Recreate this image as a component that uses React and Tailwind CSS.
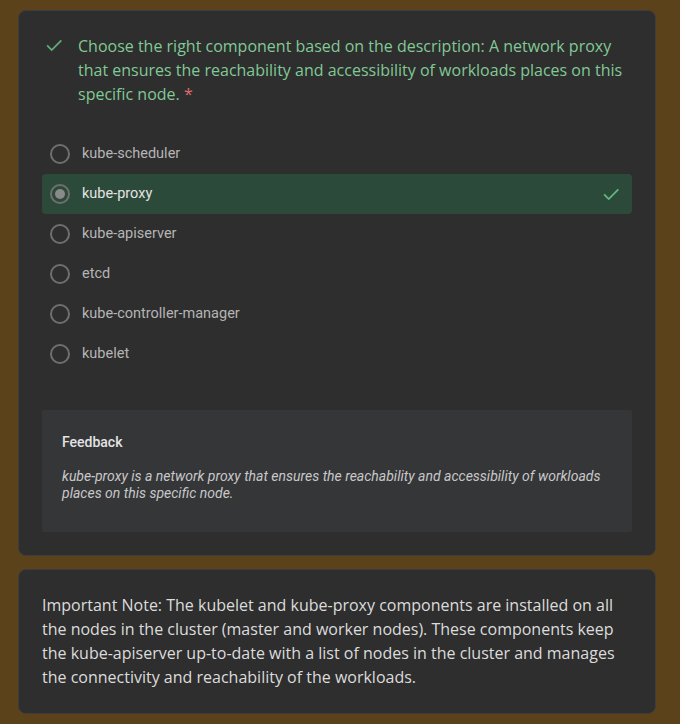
import React from 'react';

const options = [
  'kube-scheduler',
  'kube-proxy',
  'kube-apiserver',
  'etcd',
  'kube-controller-manager',
  'kubelet',
];

const CheckIcon = ({ className }) => (
  <svg className={className} width="24" height="24" viewBox="0 0 24 24" fill="none" stroke="currentColor" strokeWidth="2">
    <path d="M4.5 12.5l5 5L20 7" />
  </svg>
);

export default function App() {
  const selected = 'kube-proxy';

  return (
    <div className="min-h-[724px] bg-[#5c421a] pl-[18px] pr-[24px] pt-[10px] pb-[11px] flex flex-col gap-[13px]">
      {/* Question card */}
      <div className="bg-[#2e2e2e] border border-[#3d3d3d] rounded-lg px-[23px] pt-[23px] pb-[23px]">
        <div className="flex gap-[13px] pl-[1px]">
          <CheckIcon className="text-[#5fae7a] shrink-0 w-[22px] h-[22px]" />
          <p className="text-[16px] leading-[24px] text-[#81c995] font-['Open_Sans',sans-serif]">
            Choose the right component based on the description: A network proxy that ensures the reachability and accessibility of workloads places on this specific node. <span className="text-[#e06c6c]">*</span>
          </p>
        </div>

        <div className="mt-[28px] flex flex-col">
          {options.map((opt) => {
            const isSel = opt === selected;
            return (
              <div
                key={opt}
                className={`h-[40px] flex items-center rounded-[4px] pl-[8px] pr-[10px] ${isSel ? 'bg-[#2c4a3a]' : ''}`}
              >
                <span className="w-[20px] h-[20px] rounded-full border-2 border-[#6f6f6f] flex items-center justify-center shrink-0">
                  {isSel && <span className="w-[10px] h-[10px] rounded-full bg-[#8a8a8a]" />}
                </span>
                <span className={`ml-[12px] text-[14.5px] font-['Roboto',sans-serif] ${isSel ? 'text-[#e3e3e3]' : 'text-[#b5b5b5]'}`}>
                  {opt}
                </span>
                {isSel && <CheckIcon className="ml-auto text-[#5fb97f] w-[22px] h-[22px]" />}
              </div>
            );
          })}
        </div>

        <div className="mt-[36px] bg-[#353638] rounded-[2px] px-[20px] pt-[22px] pb-[30px]">
          <h3 className="text-[14px] font-medium text-[#e3e3e3] font-['Roboto',sans-serif]">Feedback</h3>
          <p className="mt-[15px] text-[14px] leading-[17px] italic text-[#c8c8c8] font-['Roboto',sans-serif]">
            kube-proxy is a network proxy that ensures the reachability and accessibility of workloads places on this specific node.
          </p>
        </div>
      </div>

      {/* Note card */}
      <div className="bg-[#2e2e2e] border border-[#3d3d3d] rounded-lg px-[23px] pt-[23px] pb-[24px]">
        <p className="text-[16px] leading-[24px] text-[#dcdcdc] font-['Open_Sans',sans-serif]">
          Important Note: The kubelet and kube-proxy components are installed on all the nodes in the cluster (master and worker nodes). These components keep the kube-apiserver up-to-date with a list of nodes in the cluster and manages the connectivity and reachability of the workloads.
        </p>
      </div>
    </div>
  );
}
